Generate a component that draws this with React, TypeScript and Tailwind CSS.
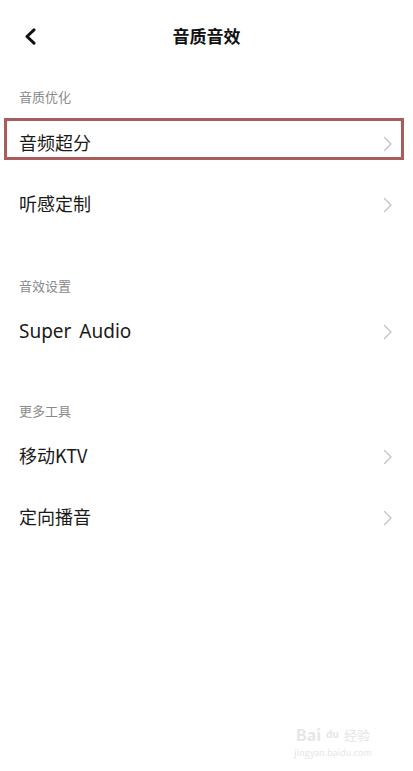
import React from "react";

const font = { fontFamily: '"Noto Sans CJK SC", "Noto Sans", sans-serif' };

function Chevron() {
  return (
    <svg width="10" height="16" viewBox="0 0 10 16" fill="none">
      <path d="M1.5 1.5 L8 8 L1.5 14.5" stroke="#c4c4c4" strokeWidth="1.4" strokeLinecap="round" strokeLinejoin="round" />
    </svg>
  );
}

function Item({ label, boxed }: { label: string; boxed?: boolean }) {
  return (
    <div className="relative flex h-[61px] items-center justify-between pl-[19px] pr-[20px]">
      <span className="pb-[3px] text-[18px] leading-none text-[#1a1a1a]">{label}</span>
      <Chevron />
      {boxed && (
        <div className="pointer-events-none absolute left-[4px] right-[9px] top-[5px] h-[42px] border-[3px] border-[#a85c5c]" />
      )}
    </div>
  );
}

function Label({ text, mt }: { text: string; mt: string }) {
  return (
    <div className={`${mt} mb-[5px] flex h-[20px] items-center pl-[19px]`}>
      <span className="pb-[1px] text-[13px] leading-none text-[#8a8a8a]">{text}</span>
    </div>
  );
}

export default function App() {
  return (
    <div className="relative h-[771px] w-[413px] overflow-hidden bg-white" style={font}>
      <div className="relative flex h-[70px] items-center justify-center">
        <div className="absolute left-[24px] top-[28px]">
          <svg width="13" height="17" viewBox="0 0 13 17" fill="none">
            <path d="M10 1.8 L3 8.5 L10 15.2" stroke="#111" strokeWidth="3" strokeLinecap="round" strokeLinejoin="round" />
          </svg>
        </div>
        <span className="text-[17px] font-bold leading-none text-[#111]">音质音效</span>
      </div>

      <div className="mt-[17px] mb-[6px] flex h-[20px] items-center pl-[19px]">
        <span className="pb-[1px] text-[13px] leading-none text-[#8a8a8a]">音质优化</span>
      </div>
      <Item label="音频超分" boxed />
      <Item label="听感定制" />

      <Label text="音效设置" mt="mt-[41px]" />
      <div className="flex h-[61px] items-center justify-between pl-[19px] pr-[20px]">
        <span className="text-[19px] leading-none text-[#1a1a1a]" style={{ fontFamily: '"Noto Sans", sans-serif', wordSpacing: "3px" }}>
          Super Audio
        </span>
        <Chevron />
      </div>

      <Label text="更多工具" mt="mt-[39px]" />
      <Item label="移动KTV" />
      <Item label="定向播音" />

      <div className="absolute left-[294px] top-[726px] flex flex-col items-center text-[#e6e6e6]">
        <div className="flex items-center gap-[5px] leading-none">
          <span className="text-[16px] font-bold">Bai</span>
          <span className="text-[10px] font-bold">du</span>
          <span className="text-[13px]">经验</span>
        </div>
        <span className="mt-[6px] text-[9px] leading-none">jingyan.baidu.com</span>
      </div>
    </div>
  );
}
